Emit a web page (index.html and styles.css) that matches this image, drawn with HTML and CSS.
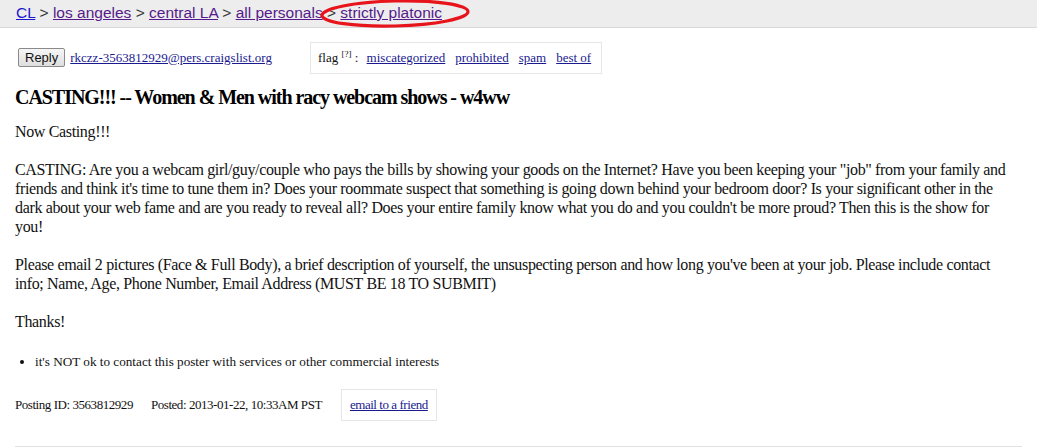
FILE: index.html
```html
<!DOCTYPE html>
<html>
<head>
<meta charset="utf-8">
<link rel="stylesheet" href="styles.css">
</head>
<body>
<header class="crumbs">
  <a class="new" href="#">CL</a> &gt; <a href="#">los angeles</a> &gt; <a href="#">central LA</a> &gt; <a href="#">all personals</a> &gt; <a href="#">strictly platonic</a>
  <svg class="ring" width="160" height="32" viewBox="0 0 160 32"><ellipse cx="79" cy="15.5" rx="73" ry="12.5" fill="none" stroke="#e8141b" stroke-width="3.2" transform="rotate(-1.5 79 15.5)"/></svg>
</header>
<main class="post">
  <div class="top">
    <div class="replyrow">
      <button class="reply">Reply</button>
      <a class="lnk" href="#">rkczz-3563812929@pers.craigslist.org</a>
    </div>
    <div class="flags">flag <sup class="q">[?]</sup> : <a class="lnk" href="#">miscategorized</a><a class="lnk" href="#">prohibited</a><a class="lnk" href="#">spam</a><a class="lnk" href="#">best of</a></div>
  </div>
  <h2 class="title">CASTING!!! -- Women &amp; Men with racy webcam shows - w4ww</h2>
  <div class="body">Now Casting!!!<br><br>CASTING: Are you a webcam girl/guy/couple who pays the bills by showing your goods on the Internet? Have you been keeping your "job" from your family and friends and think it's time to tune them in? Does your roommate suspect that something is going down behind your bedroom door? Is your significant other in the dark about your web fame and are you ready to reveal all? Does your entire family know what you do and you couldn't be more proud? Then this is the show for you!<br><br>Please email 2 pictures (Face &amp; Full Body), a brief description of yourself, the unsuspecting person and how long you've been at your job. Please include contact info; Name, Age, Phone Number, Email Address (MUST BE 18 TO SUBMIT)<br><br>Thanks!</div>
  <ul class="notes">
    <li>it's NOT ok to contact this poster with services or other commercial interests</li>
  </ul>
  <div class="foot">
    <span class="pid">Posting ID: 3563812929</span>
    <span class="date">Posted: 2013-01-22, 10:33AM PST</span>
    <span class="share"><a class="lnk" href="#">email to a friend</a></span>
  </div>
  <hr class="rule">
</main>
</body>
</html>
```

FILE: styles.css
```css
html, body {
  margin: 0;
  padding: 0;
  background: #fff;
}
body {
  font-family: "Liberation Serif", "Times New Roman", serif;
  color: #111;
}
.crumbs {
  position: relative;
  height: 27px;
  background: #ededed;
  border-bottom: 1px solid #d9d9d9;
  padding-left: 16px;
  font-family: "Liberation Sans", Arial, sans-serif;
  font-size: 15.5px;
  line-height: 25px;
  color: #333;
  box-sizing: content-box;
}
.crumbs a {
  color: #551a8b;
}
.crumbs a.new {
  color: #1a1acc;
}
.ring {
  position: absolute;
  left: 316px;
  top: -2px;
}
.post {
  padding: 0 15px;
}
.top {
  display: flex;
  align-items: center;
  margin-top: 13px;
  height: 33px;
}
.replyrow {
  display: flex;
  align-items: center;
  width: 295px;
  font-size: 13px;
  white-space: nowrap;
}
.reply {
  font-family: "Liberation Sans", Arial, sans-serif;
  font-size: 13px;
  height: 19px;
  padding: 0 6px;
  margin: 0 5px 0 3px;
  border: 1px solid #8a8a8a;
  border-radius: 2px;
  background: linear-gradient(#f6f6f6, #dedede);
  color: #111;
  line-height: 17px;
}
.lnk {
  color: #1a1a8f;
}
.flags {
  font-size: 13px;
  border: 1px solid #e6e6e6;
  height: 32px;
  box-sizing: border-box;
  padding: 0 0 0 7px;
  line-height: 30px;
  width: 292px;
  white-space: nowrap;
}
.flags .lnk {
  margin-left: 10px;
}
.flags .lnk:first-of-type {
  margin-left: 5px;
}
.q {
  font-size: 9px;
  vertical-align: 5px;
  line-height: 0;
}
.title {
  font-size: 20px;
  font-weight: bold;
  letter-spacing: -1.05px;
  margin: 10px 0 0;
  line-height: 26px;
  color: #000;
}
.body {
  font-size: 16px;
  letter-spacing: -0.35px;
  line-height: 19px;
  margin: 12px 8px 0 0;
}
.notes {
  font-size: 13.2px;
  margin: 23px 0 0;
  padding-left: 20px;
  line-height: 16px;
}
.foot {
  display: flex;
  align-items: center;
  font-size: 13px;
  letter-spacing: -0.45px;
  margin-top: 19px;
}
.pid {
  margin-right: 18px;
}
.date {
  margin-right: 19px;
}
.share {
  border: 1px solid #e6e6e6;
  height: 32px;
  box-sizing: border-box;
  display: flex;
  align-items: center;
  padding: 0 8px;
}
.rule {
  border: 0;
  border-top: 1px solid #e2e2e2;
  margin: 25px 0 0;
}
```
